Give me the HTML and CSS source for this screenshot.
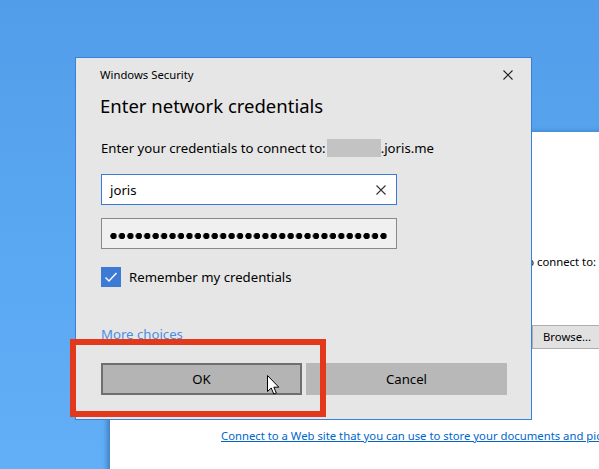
FILE: index.html
```html
<!DOCTYPE html>
<html>
<head>
<meta charset="utf-8">
<link rel="stylesheet" href="styles.css">
</head>
<body>
<div class="desktop">
  <div class="bgwin">
    <div class="bg-prompt"><span>the folder that you want to connect to:</span></div>
    <div class="bg-row"><span class="bg-browse">Browse...</span></div>
    <div class="bg-check"><span class="bg-box"></span><span>Connect using different credentials</span></div>
    <a class="bg-link" href="#">Connect to a Web site that you can use to store your documents and pictures.</a>
  </div>

  <div class="dialog">
    <div class="hdr">
      <span class="app">Windows Security</span>
      <svg class="close" width="10" height="10" viewBox="0 0 10 10"><path d="M0.5 0.5L9.5 9.5M9.5 0.5L0.5 9.5" stroke="#222" stroke-width="1.1" fill="none"/></svg>
    </div>
    <div class="title">Enter network credentials</div>
    <div class="prompt">Enter your credentials to connect to:<span class="redact"></span>.joris.me</div>
    <div class="field user">
      <span>joris</span>
      <svg class="clear" width="10" height="10" viewBox="0 0 10 10"><path d="M0.5 0.5L9.5 9.5M9.5 0.5L0.5 9.5" stroke="#333" stroke-width="1.1" fill="none"/></svg>
    </div>
    <div class="field pass"><span class="dots"></span></div>
    <div class="check">
      <span class="box"><svg width="20" height="20" viewBox="0 0 20 20"><path d="M4.5 10.5L8 14L15.5 6" stroke="#fff" stroke-width="1.4" fill="none"/></svg></span>
      <span>Remember my credentials</span>
    </div>
    <a class="more" href="#">More choices</a>
    <div class="buttons">
      <div class="btn ok">OK</div>
      <div class="btn cancel">Cancel</div>
    </div>
  </div>

  <div class="highlight"></div>
  <svg class="cursor" width="13" height="20" viewBox="0 0 13 20"><path d="M0.5 0.5L0.5 16.5L4.2 13L6.8 19L9.3 18L6.8 12.2L11.8 12.2Z" fill="#fff" stroke="#000" stroke-width="1" stroke-linejoin="miter"/></svg>
</div>
</body>
</html>
```
FILE: styles.css
```css
html, body {
  margin: 0;
  padding: 0;
}
.desktop {
  position: relative;
  width: 599px;
  height: 469px;
  overflow: hidden;
  background: linear-gradient(180deg, #519de9 0%, #5ca9f3 60%, #62aff7 100%);
  font-family: "Noto Sans", "Open Sans", sans-serif;
}
.bgwin {
  position: absolute;
  left: 110px;
  top: 132px;
  width: 560px;
  height: 360px;
  background: #fff;
  box-shadow: -3px 0 5px rgba(10, 40, 90, 0.35);
  font-size: 11.3px;
  color: #000;
}
.bg-prompt {
  width: 486px;
  display: flex;
  justify-content: flex-end;
  white-space: nowrap;
  margin-top: 122px;
  line-height: 16px;
}
.bg-row {
  margin-top: 55px;
  padding-left: 422px;
  display: flex;
}
.bg-browse {
  width: 80px;
  height: 24px;
  box-sizing: border-box;
  border: 1px solid #adadad;
  background: #e1e1e1;
  line-height: 22px;
  padding-left: 10px;
}
.bg-check {
  margin-top: 56px;
  padding-left: 112px;
  display: flex;
  align-items: center;
  gap: 6px;
  line-height: 16px;
}
.bg-box {
  width: 11px;
  height: 11px;
  border: 1px solid #333;
  background: #fff;
}
.bg-link {
  display: block;
  margin-top: 7px;
  padding-left: 111px;
  white-space: nowrap;
  color: #0066cc;
  text-decoration: underline;
  line-height: 16px;
}

.dialog {
  position: absolute;
  left: 75px;
  top: 57px;
  width: 457px;
  height: 363px;
  box-sizing: border-box;
  border: 1px solid #3a7fd9;
  background: #e6e6e6;
  padding: 9px 24px 0 25px;
  color: #000;
}
.hdr {
  display: flex;
  justify-content: space-between;
  align-items: center;
  height: 16px;
  margin-right: -6px;
}
.app {
  font-size: 11.3px;
  line-height: 16px;
  margin-left: -1px;
}
.close {
  display: block;
}
.title {
  margin-top: 9px;
  margin-left: -1px;
  font-size: 18.5px;
  line-height: 28px;
}
.prompt {
  margin-top: 18px;
  font-size: 13.2px;
  line-height: 20px;
  display: flex;
  align-items: center;
}
.redact {
  display: inline-block;
  width: 54px;
  height: 18px;
  background: #c3c3c3;
  margin-left: 1px;
}
.field {
  width: 296px;
  height: 31px;
  box-sizing: border-box;
  display: flex;
  align-items: center;
  justify-content: space-between;
  font-size: 13.2px;
}
.user {
  margin-top: 16px;
  background: #fff;
  border: 1px solid #3a7bd5;
  padding: 0 10px 0 8px;
}
.clear {
  display: block;
}
.pass {
  margin-top: 13px;
  background: #f0f0f0;
  border: 1px solid #8a8a8a;
  padding: 0 8px;
}
.dots {
  display: block;
  width: 277px;
  height: 8px;
  margin-top: 4px;
  background-image: radial-gradient(circle at 3.5px 4px, #000 2.9px, rgba(0, 0, 0, 0) 3.5px);
  background-size: 8.44px 8px;
  background-repeat: repeat-x;
}
.check {
  margin-top: 18px;
  display: flex;
  align-items: center;
  gap: 8px;
  height: 20px;
  font-size: 13.2px;
}
.box {
  width: 20px;
  height: 20px;
  background: #3d7ad6;
  display: block;
}
.box svg {
  display: block;
}
.more {
  display: block;
  margin-top: 37px;
  font-size: 13.2px;
  line-height: 20px;
  color: #4a8ee3;
  text-decoration: none;
  width: max-content;
}
.buttons {
  margin-top: 19px;
  display: flex;
  gap: 4px;
}
.btn {
  width: 201px;
  height: 32px;
  box-sizing: border-box;
  display: flex;
  align-items: center;
  justify-content: center;
  font-size: 13.2px;
  background: #b6b6b6;
}
.ok {
  border: 2px solid #6f6f6f;
  background: #b4b4b4;
}
.cancel {
  background: #b8b8b8;
}
.highlight {
  position: absolute;
  left: 70px;
  top: 339px;
  width: 256px;
  height: 78px;
  box-sizing: border-box;
  border: 6px solid #e2391d;
}
.cursor {
  position: absolute;
  left: 267px;
  top: 375px;
}
```
